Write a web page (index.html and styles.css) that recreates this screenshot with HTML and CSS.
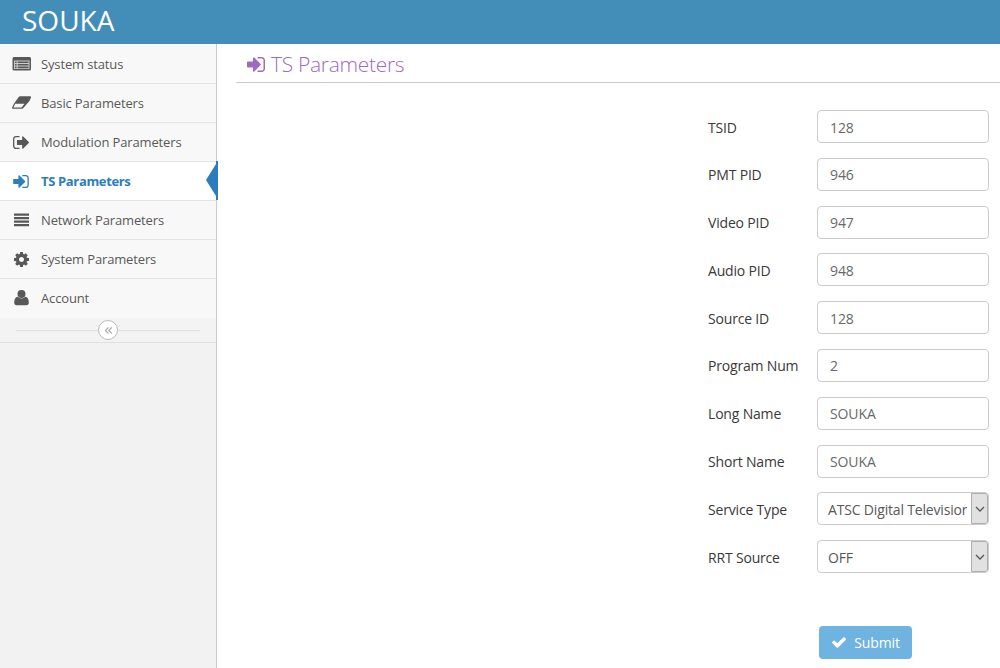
FILE: index.html
```
<!DOCTYPE html>
<html lang="en">
<head>
    <meta charset="UTF-8">
    <meta name="viewport" content="width=device-width, initial-scale=1.0">
    <title>SOUKA</title>
    <link rel="stylesheet" href="styles.css">
</head>
<body>
    <svg class="sprite" aria-hidden="true">
        <symbol id="icon-sign-in" viewBox="0 0 1536 1280">
            <path d="M1184 640q0 26-19 45l-544 544q-19 19-45 19t-45-19-19-45v-288h-448q-26 0-45-19t-19-45v-384q0-26 19-45t45-19h448v-288q0-26 19-45t45-19 45 19l544 544q19 19 19 45zm352-352v704q0 119-84.5 203.5t-203.5 84.5h-320q-13 0-22.5-9.5t-9.5-22.5q0-4-1-20t-.5-26.5 3-23.5 10-19.5 20.5-6.5h320q66 0 113-47t47-113v-704q0-66-47-113t-113-47h-312l-11.5-1-11.5-3-8-5.5-7-9-2-13.5q0-4-1-20t-.5-26.5 3-23.5 10-19.5 20.5-6.5h320q119 0 203.5 84.5t84.5 203.5z"/>
        </symbol>
    </svg>

    <div class="navbar">
        <a class="brand" href="#">SOUKA</a>
    </div>

    <div class="main-container">
        <div class="sidebar">
            <ul class="nav-list">
                <li>
                    <a href="#">
                        <svg class="menu-icon" viewBox="0 0 20 18"><rect class="icon-paper" x="2" y="4" width="17" height="11"/><path fill-rule="evenodd" d="M3 2h15.500A1.500 1.500 0 0 1 20 3.500v10.500a1.500 1.500 0 0 1-1.500 1.500H3A1.500 1.500 0 0 1 1.500 14V3.500A1.500 1.500 0 0 1 3 2zM3 5.500v8q0 .5.5.5H18q.5 0 .5-.5v-8z"/><path d="M4 6.400h1.600v1.600H4zM6.700 6.400h10.800v1.600H6.700zM4 9h1.600v1.600H4zM6.700 9h10.800v1.600H6.700zM4 11.600h1.600v1.600H4zM6.700 11.600h10.800v1.600H6.700z"/></svg>
                        <span>System status</span>
                    </a>
                </li>
                <li>
                    <a href="#">
                        <svg class="menu-icon" viewBox="0 0 20 18"><path fill-rule="evenodd" d="M9 2.300h10.200q1.300 0 .7 1.400l-1.500 3.200-6 7.200q-.6.700-1.500.7H2q-1.500 0-.9-1.400l1.500-3.200L7.700 3q.5-.7 1.300-.7zM10.600 13.500l2.900-3.700H4.200l-1.800 3.700z"/></svg>
                        <span>Basic Parameters</span>
                    </a>
                </li>
                <li>
                    <a href="#">
                        <svg class="menu-icon sign" viewBox="0 0 1568 1280"><path d="M640 1184q0 4 1 20t.5 26.500-3 23.500-10 19.500-20.500 6.500h-320q-119 0-203.500-84.500t-84.500-203.500v-704q0-119 84.500-203.500t203.500-84.500h320q13 0 22.500 9.500t9.500 22.500q0 4 1 20t.5 26.500-3 23.500-10 19.500-20.500 6.500h-320q-66 0-113 47t-47 113v704q0 66 47 113t113 47h312l11.500 1 11.500 3 8 5.500 7 9 2 13.500zm928-544q0 26-19 45l-544 544q-19 19-45 19t-45-19-19-45v-288h-448q-26 0-45-19t-19-45v-384q0-26 19-45t45-19h448v-288q0-26 19-45t45-19 45 19l544 544q19 19 19 45z"/></svg>
                        <span>Modulation Parameters</span>
                    </a>
                </li>
                <li class="active">
                    <a href="#">
                        <svg class="menu-icon sign"><use href="#icon-sign-in"/></svg>
                        <span>TS Parameters</span>
                    </a>
                </li>
                <li>
                    <a href="#">
                        <svg class="menu-icon" viewBox="0 0 20 18"><path d="M3 2.500h15v2.200H3zM3 6h15v2.200H3zM3 9.500h15v2.200H3zM3 13h15v2.200H3z"/></svg>
                        <span>Network Parameters</span>
                    </a>
                </li>
                <li>
                    <a href="#">
                        <svg class="menu-icon gear" viewBox="128 128 1536 1536"><path d="M1152 896q0-106-75-181t-181-75-181 75-75 181 75 181 181 75 181-75 75-181zm512-109v222q0 12-8 23t-20 13l-185 28q-19 54-39 91 35 50 107 138 10 12 10 25t-9 23q-27 37-99 108t-94 71q-12 0-26-9l-138-108q-44 23-91 38-16 136-29 186-7 28-36 28h-222q-14 0-24.500-8.500t-11.500-21.500l-28-184q-49-16-90-37l-141 107q-10 9-25 9-14 0-25-11-126-114-165-168-7-10-7-23 0-12 8-23 15-21 51-66.500t54-70.500q-27-50-41-99l-183-27q-13-2-21-12.500t-8-23.500v-222q0-12 8-23t19-13l186-28q14-46 39-92-40-57-107-138-10-12-10-24 0-10 9-23 26-36 98.500-107.500t94.500-71.500q13 0 26 10l138 107q44-23 91-38 16-136 29-186 7-28 36-28h222q14 0 24.500 8.500t11.500 21.500l28 184q49 16 90 37l142-107q9-9 24-9 13 0 25 10 129 119 165 170 7 8 7 22 0 12-8 23-15 21-51 66.500t-54 70.500q26 50 41 98l183 28q13 2 21 12.500t8 23.500z"/></svg>
                        <span>System Parameters</span>
                    </a>
                </li>
                <li>
                    <a href="#">
                        <svg class="menu-icon" viewBox="0 0 20 18"><circle cx="10.500" cy="5" r="4"/><path d="M6.700 7.700Q10.500 11.300 14.300 7.700q3.500.6 3.500 5.900 0 2.600-2.500 2.600H5.700q-2.500 0-2.500-2.600Q3.200 8.300 6.700 7.700z"/></svg>
                        <span>Account</span>
                    </a>
                </li>
            </ul>
            <div class="sidebar-toggle">
                <button type="button" class="toggle-btn" aria-label="Collapse">
                    <svg viewBox="0 0 10 10"><path d="M5 1.500 1.700 5 5 8.500M8.700 1.500 5.400 5l3.300 3.500"/></svg>
                </button>
            </div>
        </div>

        <div class="main-content">
            <h1 class="page-header">
                <svg class="header-icon"><use href="#icon-sign-in"/></svg>
                <span>TS Parameters</span>
            </h1>

            <form class="ts-form">
                <div class="form-group">
                    <label for="tsid">TSID</label>
                    <input type="text" id="tsid" value="128">
                </div>
                <div class="form-group">
                    <label for="pmtPid">PMT PID</label>
                    <input type="text" id="pmtPid" value="946">
                </div>
                <div class="form-group">
                    <label for="videoPid">Video PID</label>
                    <input type="text" id="videoPid" value="947">
                </div>
                <div class="form-group">
                    <label for="audioPid">Audio PID</label>
                    <input type="text" id="audioPid" value="948">
                </div>
                <div class="form-group">
                    <label for="sourceId">Source ID</label>
                    <input type="text" id="sourceId" value="128">
                </div>
                <div class="form-group">
                    <label for="programNum">Program Num</label>
                    <input type="text" id="programNum" value="2">
                </div>
                <div class="form-group">
                    <label for="longName">Long Name</label>
                    <input type="text" id="longName" value="SOUKA">
                </div>
                <div class="form-group">
                    <label for="shortName">Short Name</label>
                    <input type="text" id="shortName" value="SOUKA">
                </div>
                <div class="form-group">
                    <label for="serviceType">Service Type</label>
                    <div class="select-box">
                        <select id="serviceType">
                            <option>ATSC Digital Television</option>
                        </select>
                        <span class="select-arrow"><svg viewBox="0 0 10 6"><path d="M1 1l4 4 4-4"/></svg></span>
                    </div>
                </div>
                <div class="form-group">
                    <label for="rrtSource">RRT Source</label>
                    <div class="select-box">
                        <select id="rrtSource">
                            <option>OFF</option>
                        </select>
                        <span class="select-arrow"><svg viewBox="0 0 10 6"><path d="M1 1l4 4 4-4"/></svg></span>
                    </div>
                </div>

                <button type="button" class="btn-submit">
                    <svg viewBox="121 334 1550 1188"><path d="M1671 566q0 40-28 68l-724 724-136 136q-28 28-68 28t-68-28l-136-136-362-362q-28-28-28-68t28-68l136-136q28-28 68-28t68 28l294 295 656-657q28-28 68-28t68 28l136 136q28 28 28 68z"/></svg>
                    <span>Submit</span>
                </button>
            </form>
        </div>
    </div>
</body>
</html>
```
FILE: styles.css
```
* {
    margin: 0;
    padding: 0;
    box-sizing: border-box;
}

body {
    font-family: 'Open Sans', sans-serif;
    font-size: 14px;
    color: #393939;
    background: #fff;
    height: 100vh;
    display: flex;
    flex-direction: column;
    overflow: hidden;
}

a {
    text-decoration: none;
}

.sprite {
    display: none;
}

.navbar {
    height: 44px;
    flex: none;
    background: #438eb9;
    padding-left: 22px;
}

.brand {
    color: #fff;
    font-size: 28px;
    line-height: 41px;
}

.main-container {
    flex: 1;
    display: flex;
    min-height: 0;
}

/* sidebar */
.sidebar {
    width: 217px;
    flex: none;
    background: #f2f2f2;
    border-right: 1px solid #ccc;
}

.nav-list {
    list-style: none;
}

.nav-list li {
    position: relative;
    height: 39px;
    background: #f8f8f8;
    border-top: 1px solid #e5e5e5;
}

.nav-list li:first-child {
    border-top-color: #f8f8f8;
}

.nav-list li:last-child {
    height: 40px;
}

.nav-list a {
    display: flex;
    align-items: center;
    height: 38px;
    padding: 0 0 0 11px;
    font-size: 13px;
    letter-spacing: -0.14px;
    color: #585858;
}

.menu-icon {
    width: 20px;
    height: 18px;
    margin-right: 10px;
    fill: currentColor;
}

.menu-icon .icon-paper {
    fill: #ccc;
}

.menu-icon.sign {
    width: 16px;
    height: 13px;
    margin: 0 12px 0 2px;
}

.menu-icon.gear {
    width: 15px;
    height: 15px;
    margin: 0 12px 0 3px;
}

.nav-list .active {
    background: #fff;
}

.nav-list .active a {
    color: #2b7dbc;
    font-weight: bold;
    letter-spacing: -0.35px;
}

/* blue bar and arrow over the sidebar edge */
.active::before,
.active::after {
    content: '';
    position: absolute;
}

.active::before {
    top: -1px;
    right: -2px;
    width: 2px;
    height: 39px;
    background: #2b7dbc;
}

.active::after {
    top: 2px;
    right: 0;
    border: solid transparent;
    border-width: 16px 10px 16px 0;
    border-right-color: #2b7dbc;
}

.sidebar-toggle {
    height: 25px;
    padding: 0 16px;
    display: flex;
    align-items: center;
    background: #f3f3f3;
    border-bottom: 1px solid #e0e0e0;
}

.sidebar-toggle::before,
.sidebar-toggle::after {
    content: '';
    flex: 1;
    height: 1px;
    background: #e0e0e0;
}

.toggle-btn {
    width: 20px;
    height: 20px;
    display: flex;
    align-items: center;
    justify-content: center;
    background: #fff;
    border: 1px solid #bbb;
    border-radius: 50%;
}

.toggle-btn svg {
    width: 9px;
    height: 9px;
    fill: none;
    stroke: #aaa;
    stroke-width: 1.4;
}

/* content */
.main-content {
    flex: 1;
    padding-left: 19px;
}

.page-header {
    height: 39px;
    padding: 0 0 0 11px;
    display: flex;
    align-items: center;
    border-bottom: 1px solid #ccc;
    color: #a069c3;
    font-size: 21px;
    font-weight: 300;
    letter-spacing: -0.3px;
}

.header-icon {
    width: 18px;
    height: 15px;
    margin: 3px 6px 0 0;
    fill: currentColor;
}

.page-header span {
    padding-top: 2px;
}

.ts-form {
    width: 281px;
    margin: 27px 0 0 472px;
}

.form-group {
    display: flex;
    align-items: center;
    height: 33px;
    margin-bottom: 14.8px;
}

.form-group label {
    width: 109px;
    padding-top: 1px;
    letter-spacing: -0.18px;
}

.form-group input,
.select-box {
    width: 172px;
    height: 33px;
    border: 1px solid #ccc;
    border-radius: 4px;
    background: #fff;
}

.form-group input {
    padding: 1px 11px 0 12px;
    font: inherit;
    letter-spacing: -0.1px;
    color: #696969;
}

.select-box {
    display: flex;
    overflow: hidden;
}

.select-box select {
    flex: 1;
    min-width: 0;
    padding: 2px 4px 0 10px;
    appearance: none;
    border: none;
    background: none;
    font: inherit;
    letter-spacing: -0.17px;
    color: #585858;
}

.select-arrow {
    width: 17px;
    display: flex;
    align-items: center;
    justify-content: center;
    background: #e1e1e1;
    border: 1px solid #adadad;
    border-radius: 0 3px 3px 0;
}

.select-arrow svg {
    width: 10px;
    height: 6px;
    fill: none;
    stroke: #555;
    stroke-width: 1.3;
}

.btn-submit {
    display: flex;
    align-items: center;
    justify-content: center;
    width: 93px;
    height: 33px;
    margin: 53px 0 0 111px;
    padding-left: 1px;
    border: none;
    border-radius: 4px;
    background: #6fb3e0;
    color: #fff;
    font: inherit;
    letter-spacing: -0.1px;
}

.btn-submit svg {
    width: 14px;
    height: 11px;
    margin-right: 8px;
    fill: currentColor;
}
```
